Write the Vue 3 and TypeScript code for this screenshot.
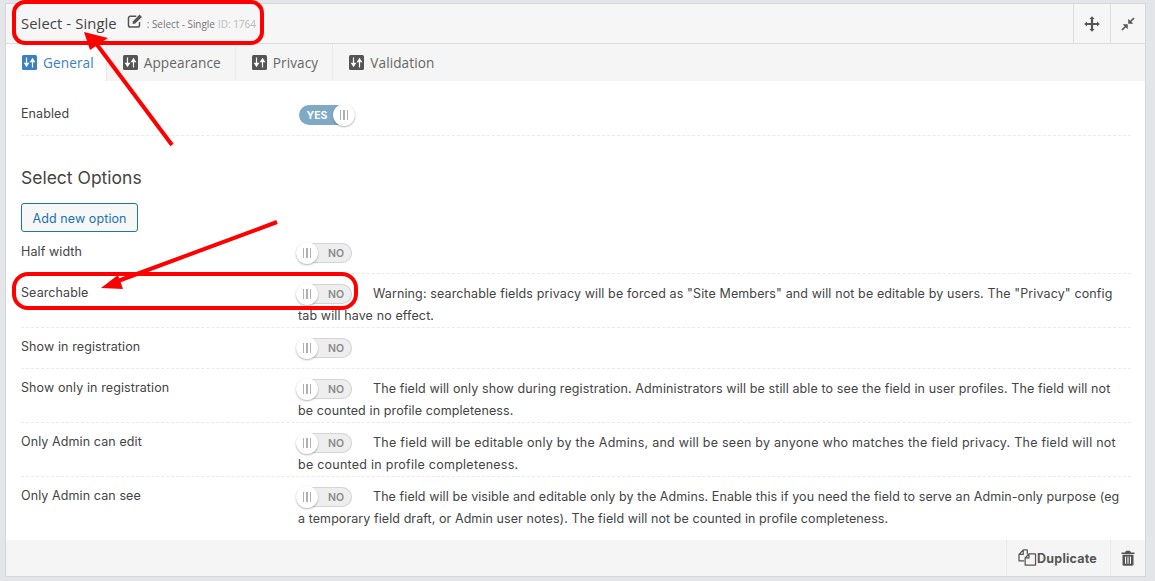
<script setup lang="ts">
interface Row { label: string; note?: string; cls: string; track?: string }
const rows: Row[] = [
  { label: 'Half width', cls: 'r-half' },
  { label: 'Searchable', cls: 'r-note', track: 't-warn', note: 'Warning: searchable fields privacy will be forced as "Site Members" and will not be editable by users. The "Privacy" config tab will have no effect.' },
  { label: 'Show in registration', cls: 'r-plain' },
  { label: 'Show only in registration', cls: 'r-note', track: 't-reg', note: 'The field will only show during registration. Administrators will be still able to see the field in user profiles. The field will not be counted in profile completeness.' },
  { label: 'Only Admin can edit', cls: 'r-note', track: 't-edit', note: 'The field will be editable only by the Admins, and will be seen by anyone who matches the field privacy. The field will not be counted in profile completeness.' },
  { label: 'Only Admin can see', cls: 'r-note r-last', track: 't-see', note: 'The field will be visible and editable only by the Admins. Enable this if you need the field to serve an Admin-only purpose (eg a temporary field draft, or Admin user notes). The field will not be counted in profile completeness.' },
]
const tabs = ['General', 'Appearance', 'Privacy', 'Validation']
</script>

<template>
  <div class="page">
    <div class="panel">
      <header class="head">
        <div class="title">
          <span class="name">Select - Single</span>
          <svg class="edit" viewBox="0 0 16 16" width="16" height="16">
            <path d="M12.500 9v3.200a1.800 1.800 0 0 1-1.800 1.800H3.300a1.800 1.800 0 0 1-1.800-1.800V5a1.800 1.800 0 0 1 1.800-1.800h6" fill="none" stroke="#555" stroke-width="1.500"/>
            <path d="M6 8.200 12.600 1.600l2.300 2.300L8.300 10.500 5.500 11z" fill="#555"/>
          </svg>
          <span class="sub">: Select - Single</span>
          <span class="id">ID: 1764</span>
        </div>
        <div class="tool move">
          <svg viewBox="0 0 16 16" width="16" height="16"><path d="M8 .3 10.600 3H9.100V6.900H13V5.400L15.700 8 13 10.600V9.100H9.100V13H10.600L8 15.700 5.400 13H6.900V9.100H3V10.600L.3 8 3 5.400V6.900H6.900V3H5.400z" fill="#555"/></svg>
        </div>
        <div class="tool">
          <svg viewBox="0 0 16 16" width="14" height="14"><path d="M15.500 1.800 11.800 5.500 14 7.700H8.300V2L10.500 4.200 14.200.5zM.5 14.200 4.200 10.500 2 8.300H7.700V14L5.500 11.800 1.800 15.500z" fill="#555"/></svg>
        </div>
      </header>

      <nav class="tabs">
        <div v-for="(t, i) in tabs" :key="t" class="tab" :class="{ active: i === 0 }">
          <svg viewBox="0 0 15 15" width="15" height="15">
            <rect width="15" height="15" rx="1.500" fill="currentColor"/>
            <path d="M4.500 2.500v7M2.700 8.300l1.800 2.900 1.800-2.900zM10.500 12.500v-7M8.700 6.700l1.800-2.900 1.800 2.900z" stroke="#fff" stroke-width="1.200" fill="#fff"/>
          </svg>
          <span>{{ t }}</span>
        </div>
      </nav>

      <main class="body">
        <div class="row r-enabled">
          <div class="label">Enabled</div>
          <div class="ctl">
            <span class="sw on"><b>YES</b><i class="knob"><u></u><u></u><u></u></i></span>
          </div>
        </div>

        <h3 class="section">Select Options</h3>
        <button class="add" type="button">Add new option</button>

        <div v-for="r in rows" :key="r.label" class="row" :class="r.cls">
          <div class="label">{{ r.label }}</div>
          <div class="ctl">
            <span class="sw off"><i class="knob"><u></u><u></u><u></u></i><b>NO</b></span><span v-if="r.note" class="note" :class="r.track">{{ r.note }}</span>
          </div>
        </div>
      </main>

      <footer class="foot">
        <div class="dup">
          <svg viewBox="0 0 20 18" width="19" height="17">
            <path d="M5.500 1h4.300v4.500M5.500 1 1 5.800V12.500h5.500M5.500 1v4.800H1" fill="none" stroke="#555" stroke-width="1.300" stroke-linejoin="round"/>
            <path d="M11.500 5.200H18.500V17H7.500V9.500zM11.500 5.200V9.500H7.500" fill="#f5f5f5" stroke="#555" stroke-width="1.300" stroke-linejoin="round"/>
          </svg>
          <span>Duplicate</span>
        </div>
        <div class="trash">
          <svg viewBox="0 0 14 16" width="14" height="16">
            <path d="M5 .7h4l1 1.800h3.500v1.500H.5V2.500H4z" fill="#555"/>
            <path fill-rule="evenodd" d="M1.500 4.800h11V14.200a1.500 1.500 0 0 1-1.500 1.500H3a1.500 1.500 0 0 1-1.500-1.500zM4 6.500v7.300h1.100V6.500zM6.450 6.500v7.300h1.100V6.500zM8.900 6.500v7.300H10V6.500z" fill="#555"/>
          </svg>
        </div>
      </footer>
    </div>

    <svg class="marks" viewBox="0 0 1155 581" width="1155" height="581">
      <rect x="14" y="2" width="248" height="41" rx="11" fill="none" stroke="#f00" stroke-width="4"/>
      <rect x="14" y="274" width="342" height="34" rx="14" fill="none" stroke="#f00" stroke-width="4"/>
      <line x1="172" y1="145" x2="95" y2="42" stroke="#f00" stroke-width="4"/>
      <polygon points="84,32 108,38 90,50" fill="#f00"/>
      <line x1="277" y1="222" x2="118" y2="281" stroke="#f00" stroke-width="4"/>
      <polygon points="101,288 118,275 123,289" fill="#f00"/>
    </svg>
  </div>
</template>

<style>
html, body { margin: 0; background: #e4e5e9; }
</style>

<style scoped>
.page {
  position: relative;
  width: 1155px;
  height: 581px;
  padding: 3px 9px 0 5px;
  box-sizing: border-box;
  overflow: hidden;
  font-family: Inter, "Open Sans", sans-serif;
  color: #444;
}
.panel {
  height: 574px;
  display: flex;
  flex-direction: column;
  background: #fff;
  border: 1px solid #d6d6d6;
  box-sizing: border-box;
}
.head {
  height: 40px;
  flex: none;
  display: flex;
  background: #f6f6f6;
  border-bottom: 1px solid #dcdcdc;
  box-sizing: border-box;
  font-family: "Open Sans", sans-serif;
}
.title {
  flex: 1;
  display: flex;
  align-items: center;
  padding: 0 0 2px 15px;
}
.name { font-size: 14.800px; color: #444; letter-spacing: .1px; }
.edit { margin-left: 10px; margin-top: -3px; }
.sub { font-size: 10px; color: #777; margin-left: 4px; margin-top: 2px; letter-spacing: -.05px; }
.id { font-size: 10px; color: #bbb; margin-left: 3px; margin-top: 2px; }
.tool {
  width: 34px;
  display: flex;
  align-items: center;
  justify-content: center;
  border-left: 1px solid #dcdcdc;
}
.tool.move { width: 36px; }
.tabs {
  height: 37px;
  flex: none;
  display: flex;
  background: #f5f5f5;
  font-family: "Open Sans", sans-serif;
}
.tab {
  display: flex;
  align-items: center;
  gap: 6px;
  padding: 0 14px 1px 16px;
  font-size: 13.600px;
  letter-spacing: .1px;
  color: #666;
  border-right: 1px solid #e9e9e9;
}
.tab:first-child { padding-right: 12px; }
.tab:last-child { border-right: 0; }
.tab svg { color: #555; }
.tab.active { background: #fff; color: #3a80c4; }
.tab.active svg { color: #3a80c4; }
.body {
  flex: 1;
  padding: 0 14px 0 15px;
  min-height: 0;
}
.row {
  display: flex;
  border-bottom: 1px dashed #eaeaea;
  font-size: 12.500px;
  line-height: 22px;
  box-sizing: border-box;
}
.r-enabled { height: 55px; padding-top: 22px; }
.r-half { height: 42px; padding-top: 9px; }
.r-note { height: 54px; padding-top: 8px; }
.r-plain { height: 41px; padding-top: 8px; }
.r-last { border-bottom: 0; }
.label { width: 277px; flex: none; letter-spacing: .1px; }
.ctl { flex: 1; padding: 1px 3px 0 0; }
.sw {
  display: inline-flex;
  align-items: center;
  vertical-align: top;
  width: 56px;
  height: 20px;
  margin-top: 1px;
  border-radius: 10px;
  box-sizing: border-box;
  background: #eee;
  box-shadow: inset 0 0 0 1px #d4d4d4;
  font-size: 10.500px;
}
.sw.off { margin-left: -2px; }
.sw b { flex: 1; text-align: center; color: #8a8a8a; font-weight: 600; line-height: 20px; padding: 1px 0 0 2px; }
.sw.on { background: #7fa9c4; box-shadow: none; margin-left: 1px; }
.sw.on b { color: #fff; font-weight: 700; }
.knob {
  width: 22px;
  height: 22px;
  flex: none;
  margin: -1px 0;
  border-radius: 50%;
  background: #fff;
  box-shadow: 0 1px 2px rgba(0,0,0,.3);
  display: flex;
  align-items: center;
  justify-content: center;
  gap: 2.500px;
}
.knob u { width: 1.200px; height: 10px; background: #b0b0b0; display: block; }
.note { margin-left: 21px; }
.t-warn { letter-spacing: .12px; }
.t-reg { letter-spacing: .11px; }
.t-edit { letter-spacing: .25px; }
.t-see { letter-spacing: .08px; }
.section {
  margin: 0;
  padding-top: 30px;
  font-size: 17.500px;
  font-weight: 400;
  line-height: 24px;
  color: #444;
}
.add {
  display: block;
  margin-top: 13px;
  width: 117px;
  height: 29px;
  padding: 1px 0 0;
  background: #f6f7f7;
  border: 1px solid #2271b1;
  border-radius: 3px;
  color: #2271b1;
  font: 12.500px Inter, "Open Sans", sans-serif;
  letter-spacing: .1px;
}
.foot {
  height: 36px;
  flex: none;
  display: flex;
  justify-content: flex-end;
  background: #f5f5f5;
}
.dup {
  display: flex;
  align-items: center;
  padding: 0 13px 0 11px;
  border-left: 1px solid #eaeaea;
  font-size: 12.500px;
  font-weight: 700;
  letter-spacing: .2px;
  color: #555;
}
.dup svg { margin-top: -2px; }
.trash {
  width: 34px;
  display: flex;
  align-items: center;
  justify-content: center;
  border-left: 1px solid #eaeaea;
}
.marks { position: absolute; left: 0; top: 0; pointer-events: none; }
</style>
